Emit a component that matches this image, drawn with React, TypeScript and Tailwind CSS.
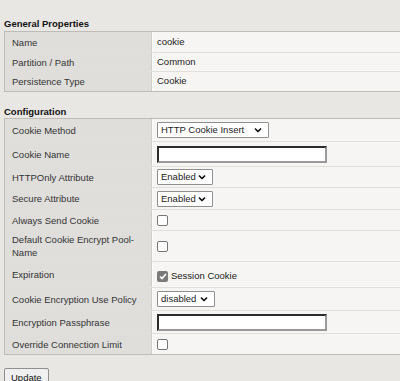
import React from "react";

type Row = { label: string; h: string; value: React.ReactNode };

function Chevron() {
  return (
    <svg width="8" height="5" viewBox="0 0 8 5" className="absolute right-[6px] top-1/2 -translate-y-1/2">
      <path d="M1 1 L4 4 L7 1" fill="none" stroke="#111" strokeWidth="1.6" />
    </svg>
  );
}

function Select({ text, w }: { text: string; w: string }) {
  return (
    <div className={`relative h-[16px] ${w} border border-[#8f8f8f] bg-white rounded-[1px] text-[9.5px] leading-[14px] pl-[3px] text-[#222]`}>
      {text}
      <Chevron />
    </div>
  );
}

function TextBox() {
  return <div className="h-[17px] w-[170px] border-2 border-[#2b2b2b] border-r-[#9a9a9a] border-b-[#9a9a9a] bg-white" />;
}

function Check({ on }: { on?: boolean }) {
  return on ? (
    <div className="w-[11px] h-[11px] rounded-[2px] bg-[#7a7a7a] flex items-center justify-center">
      <svg width="8" height="7" viewBox="0 0 8 7">
        <path d="M1 3.5 L3 5.5 L7 1" fill="none" stroke="#fff" strokeWidth="1.6" />
      </svg>
    </div>
  ) : (
    <div className="w-[11px] h-[11px] rounded-[2px] border border-[#767676] bg-white" />
  );
}

function Table({ rows }: { rows: Row[] }) {
  return (
    <div className="ml-[4px] border border-[#bdbcb8] border-r-0">
      {rows.map((r, i) => (
        <div key={i} className={`flex ${r.h} ${i > 0 ? "border-t border-[#e0dfdb]" : ""}`}>
          <div className="w-[147px] shrink-0 bg-[#dfdedb] border-r border-[#cfceca] pl-[7px] pr-[2px] flex items-center text-[9.5px] leading-[13px] text-[#333]">
            {r.label}
          </div>
          <div className="flex-1 bg-[#f6f5f3] border-l border-[#fbfbfa] pl-[4px] flex items-center text-[9.5px] text-[#222]">
            {r.value}
          </div>
        </div>
      ))}
    </div>
  );
}

export default function App() {
  const general: Row[] = [
    { label: "Name", h: "h-[20px]", value: "cookie" },
    { label: "Partition / Path", h: "h-[19px]", value: "Common" },
    { label: "Persistence Type", h: "h-[20px]", value: "Cookie" },
  ];
  const config: Row[] = [
    { label: "Cookie Method", h: "h-[22px]", value: <Select text="HTTP Cookie Insert" w="w-[112px]" /> },
    { label: "Cookie Name", h: "h-[25px]", value: <TextBox /> },
    { label: "HTTPOnly Attribute", h: "h-[21px]", value: <Select text="Enabled" w="w-[56px]" /> },
    { label: "Secure Attribute", h: "h-[22px]", value: <Select text="Enabled" w="w-[56px]" /> },
    { label: "Always Send Cookie", h: "h-[21px]", value: <Check /> },
    { label: "Default Cookie Encrypt Pool-Name", h: "h-[31px]", value: <Check /> },
    {
      label: "Expiration",
      h: "h-[26px]",
      value: (
        <div className="flex items-center gap-[3px] pt-[3px]">
          <Check on />
          <span>Session Cookie</span>
        </div>
      ),
    },
    { label: "Cookie Encryption Use Policy", h: "h-[23px]", value: <Select text="disabled" w="w-[58px]" /> },
    { label: "Encryption Passphrase", h: "h-[23px]", value: <TextBox /> },
    { label: "Override Connection Limit", h: "h-[21px]", value: <Check /> },
  ];

  return (
    <div className="w-[400px] h-[381px] overflow-hidden bg-[#e8e7e3] font-['Liberation_Sans',Arial,sans-serif]">
      <div className="pt-[17px] pl-[4px] h-[31px] text-[9.5px] font-bold text-[#111]">General Properties</div>
      <Table rows={general} />
      <div className="pt-[13px] pl-[4px] h-[26px] text-[9.5px] font-bold text-[#111]">Configuration</div>
      <Table rows={config} />
      <div className="pt-[9px] pl-[4px]">
        <div className="inline-block h-[20px] px-[6px] border border-[#8f8f8f] rounded-[2px] bg-[#f0f0f0] text-[9.5px] leading-[18px] text-[#111]">
          Update
        </div>
      </div>
    </div>
  );
}
